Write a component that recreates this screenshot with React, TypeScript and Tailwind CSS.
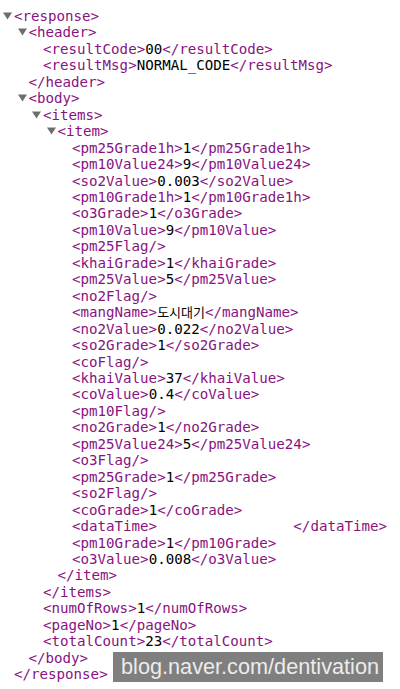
type Row =
  | { d: number; t: "open"; n: string }
  | { d: number; t: "close"; n: string }
  | { d: number; t: "leaf"; n: string; v: string }
  | { d: number; t: "empty"; n: string };

const rows: Row[] = [
  { d: 0, t: "open", n: "response" },
  { d: 1, t: "open", n: "header" },
  { d: 2, t: "leaf", n: "resultCode", v: "00" },
  { d: 2, t: "leaf", n: "resultMsg", v: "NORMAL_CODE" },
  { d: 1, t: "close", n: "header" },
  { d: 1, t: "open", n: "body" },
  { d: 2, t: "open", n: "items" },
  { d: 3, t: "open", n: "item" },
  { d: 4, t: "leaf", n: "pm25Grade1h", v: "1" },
  { d: 4, t: "leaf", n: "pm10Value24", v: "9" },
  { d: 4, t: "leaf", n: "so2Value", v: "0.003" },
  { d: 4, t: "leaf", n: "pm10Grade1h", v: "1" },
  { d: 4, t: "leaf", n: "o3Grade", v: "1" },
  { d: 4, t: "leaf", n: "pm10Value", v: "9" },
  { d: 4, t: "empty", n: "pm25Flag" },
  { d: 4, t: "leaf", n: "khaiGrade", v: "1" },
  { d: 4, t: "leaf", n: "pm25Value", v: "5" },
  { d: 4, t: "empty", n: "no2Flag" },
  { d: 4, t: "leaf", n: "mangName", v: "도시대기" },
  { d: 4, t: "leaf", n: "no2Value", v: "0.022" },
  { d: 4, t: "leaf", n: "so2Grade", v: "1" },
  { d: 4, t: "empty", n: "coFlag" },
  { d: 4, t: "leaf", n: "khaiValue", v: "37" },
  { d: 4, t: "leaf", n: "coValue", v: "0.4" },
  { d: 4, t: "empty", n: "pm10Flag" },
  { d: 4, t: "leaf", n: "no2Grade", v: "1" },
  { d: 4, t: "leaf", n: "pm25Value24", v: "5" },
  { d: 4, t: "empty", n: "o3Flag" },
  { d: 4, t: "leaf", n: "pm25Grade", v: "1" },
  { d: 4, t: "empty", n: "so2Flag" },
  { d: 4, t: "leaf", n: "coGrade", v: "1" },
  { d: 4, t: "leaf", n: "dataTime", v: "                " },
  { d: 4, t: "leaf", n: "pm10Grade", v: "1" },
  { d: 4, t: "leaf", n: "o3Value", v: "0.008" },
  { d: 3, t: "close", n: "item" },
  { d: 2, t: "close", n: "items" },
  { d: 2, t: "leaf", n: "numOfRows", v: "1" },
  { d: 2, t: "leaf", n: "pageNo", v: "1" },
  { d: 2, t: "leaf", n: "totalCount", v: "23" },
  { d: 1, t: "close", n: "body" },
  { d: 0, t: "close", n: "response" },
];

const indent = ["pl-[14px]", "pl-[28.5px]", "pl-[43px]", "pl-[57.5px]", "pl-[72px]"];

function Arrow() {
  return (
    <span className="inline-block w-[11px] -ml-[11px] align-middle">
      <svg width="9" height="8" viewBox="0 0 9 8" className="block -mt-[2px]">
        <path d="M0 0.5 H9 L4.5 7.5 Z" fill="#6e6e6e" />
      </svg>
    </span>
  );
}

function Tag({ children }: { children: React.ReactNode }) {
  return <span className="text-[#881280]">{children}</span>;
}

function Line({ row }: { row: Row }) {
  return (
    <div className={`${indent[row.d]} whitespace-pre`}>
      {row.t === "open" && (
        <>
          <Arrow />
          <Tag>{`<${row.n}>`}</Tag>
        </>
      )}
      {row.t === "close" && <Tag>{`</${row.n}>`}</Tag>}
      {row.t === "empty" && <Tag>{`<${row.n}/>`}</Tag>}
      {row.t === "leaf" && (
        <>
          <Tag>{`<${row.n}>`}</Tag>
          <span
            className={
              /[가-힣]/.test(row.v)
                ? "text-black text-[13px] [font-family:'Noto_Sans_CJK_KR',sans-serif]"
                : "text-black"
            }
          >
            {row.v}
          </span>
          <Tag>{`</${row.n}>`}</Tag>
        </>
      )}
    </div>
  );
}

export default function App() {
  return (
    <div className="relative w-[400px] h-[689px] overflow-hidden bg-white">
      <div className="pt-[8px] text-[14.15px] leading-[16.45px] [font-family:'DejaVu_Sans_Mono','Noto_Sans_CJK_KR',monospace]">
        {rows.map((r, i) => (
          <Line key={i} row={r} />
        ))}
      </div>

      {/* watermark */}
      <div className="absolute left-[113px] top-[652px] w-[270px] h-[30px] bg-[#7f7f7f] flex items-center pl-[8px]">
        <span className="text-[#ececec] text-[21.7px] leading-none [font-family:'Liberation_Sans',Arial,sans-serif]">
          blog.naver.com/dentivation
        </span>
      </div>
    </div>
  );
}
